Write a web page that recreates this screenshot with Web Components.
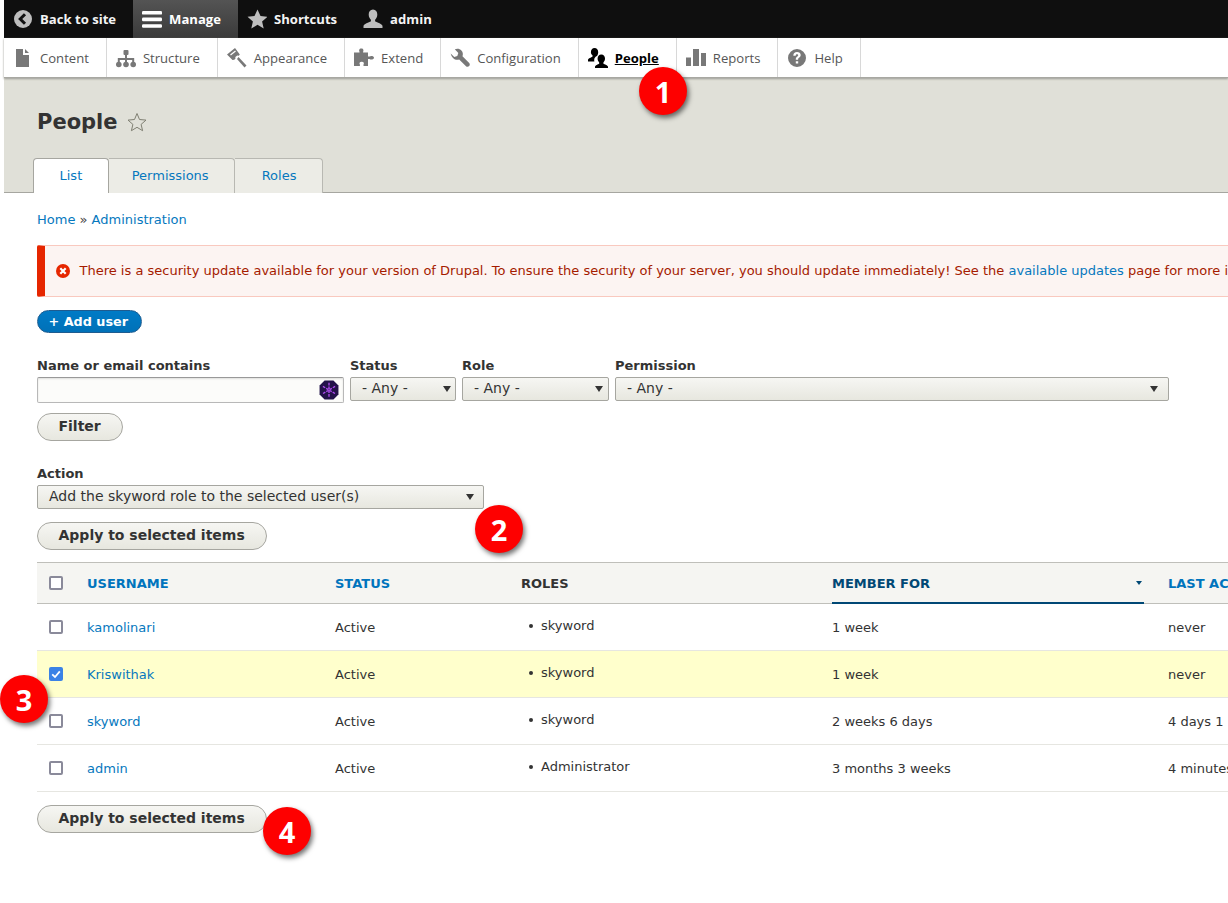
<!DOCTYPE html>
<html lang="en">
<head>
<meta charset="utf-8">
<title>People</title>
<style>
  html, body { margin: 0; padding: 0; height: 903px; overflow: hidden; background: #fff; }
  body { padding-left: 4px; font-family: "DejaVu Sans", sans-serif; font-size: 13px; color: #333; position: relative; }
</style>
</head>
<body>
<admin-toolbar>
  <toolbar-item><svg slot="icon" viewBox="0 0 20 20" width="20" height="20"><circle cx="10" cy="10" r="9" fill="#bebebe"/><path d="M12 5.200 7.200 10l4.800 4.800" fill="none" stroke="#111" stroke-width="3"/></svg>Back to site</toolbar-item>
  <toolbar-item active><svg slot="icon" viewBox="0 0 20 20" width="20" height="20"><g fill="#fff"><rect y="2" width="20" height="3.600" rx="1.200"/><rect y="8.600" width="20" height="3.600" rx="1.200"/><rect y="15.200" width="20" height="3.600" rx="1.200"/></g></svg>Manage</toolbar-item>
  <toolbar-item><svg slot="icon" viewBox="0 0 20 20" width="20" height="20"><path d="M10.500 .5l3 6.600 7 .7-5.400 4.700 1.600 7-6.200-3.700-6.200 3.700 1.600-7L.5 7.800l7-.7z" fill="#bebebe"/></svg>Shortcuts</toolbar-item>
  <toolbar-item><svg slot="icon" viewBox="0 0 20 20" width="20" height="20"><path d="M10 .5c2.800 0 4.300 2.200 4.300 5 0 2.300-1 4.300-2.200 5.200v1.600c0 .7 5.900 1.700 7.400 4.400V19H.5v-2.300c1.500-2.700 7.400-3.700 7.400-4.400v-1.600C6.700 9.800 5.700 7.800 5.700 5.500c0-2.800 1.500-5 4.300-5z" fill="#bebebe"/></svg>admin</toolbar-item>
</admin-toolbar>

<admin-tray>
  <tray-item><svg slot="icon" viewBox="0 0 20 20" width="20" height="20"><path d="M3 1h7v6h6v12H3zM12 1l4 4h-4z" fill="#787878"/></svg>Content</tray-item>
  <tray-item><svg slot="icon" viewBox="0 0 20 20" width="20" height="20"><g fill="#787878"><rect x="7.500" y="2" width="5" height="5" rx="1"/><circle cx="2.800" cy="16.500" r="2.800"/><circle cx="10" cy="16.500" r="2.800"/><circle cx="17.200" cy="16.500" r="2.800"/></g><path d="M10 5v11M2.800 15v-4h14.400v4" fill="none" stroke="#787878" stroke-width="2"/></svg>Structure</tray-item>
  <tray-item><svg slot="icon" viewBox="0 0 20 20" width="20" height="20"><path d="M8 0 0 6.500l5.500 5.500 1.800-.3 1.200-1.200-.2-1.500 2-1.500 1.500.2 1-1.200z" fill="#787878"/><path d="M11.500 9 19.500 17.500l-2 2L10 11z" fill="#787878"/><path d="M3.500 7 8.500 3" stroke="#fff" stroke-width="1.200"/></svg>Appearance</tray-item>
  <tray-item><svg slot="icon" viewBox="0 0 20 20" width="20" height="20"><path d="M0 4.500h5.500V3.800C4.800 2.800 5 .5 7.300 .5s2.500 2.300 1.800 3.300v.7H14v4h1.500c1-1 4.500-.8 4.500 1.200s-3.500 2.200-4.500 1.200H14V18H9.500v-1.500c.8-1 .5-2.800-1.800-2.800s-2.600 1.800-1.800 2.800V18H0z" fill="#787878"/></svg>Extend</tray-item>
  <tray-item><svg slot="icon" viewBox="0 0 20 20" width="20" height="20"><path d="M19.300 5.500 15.700 9l-3-1-1-3L15.200 1.300C12.900.3 10 .8 8.600 2.400 7 4 6.800 6.200 7.500 8.300L.8 15c-.8.800-.8 2.200 0 3s2.300 1 3.200.2l6.800-6.700c2 .7 4.300.4 5.900-1.200 1.700-1.600 2.300-3.600 2.600-4.800z" fill="#787878" transform="translate(20 0) scale(-1 1)"/></svg>Configuration</tray-item>
  <tray-item active><svg slot="icon" viewBox="0 0 20 20" width="20" height="20"><path d="M6.500 0c2.400 0 3.700 1.800 3.700 4.200 0 1.500-.5 2.800-1.200 3.700-1.500.4-2.800 2-2.800 4 0 .5 0 1 .2 1.500H0v-1.700c.8-1.800 4.500-2.500 4.500-3.200V7.300C3.600 6.500 2.900 5.500 2.900 4.200 2.900 1.800 4.300 0 6.500 0z" fill="#000"/><path d="M13.300 6.500c2.400 0 3.700 1.800 3.700 4.100 0 1.600-.6 2.900-1.600 3.800v1.100c0 .6 3.600 1.100 4.600 3.100V20H7v-1.400c1-2 4.200-2.500 4.200-3.100v-1.100c-1-.9-1.600-2.200-1.600-3.800 0-2.300 1.300-4.100 3.700-4.100z" fill="#000"/></svg>People</tray-item>
  <tray-item><svg slot="icon" viewBox="0 0 20 20" width="20" height="20"><g fill="#787878"><rect y="9.500" width="5" height="8.500"/><rect x="7" y="1" width="6" height="17"/><rect x="15" y="5" width="5" height="13"/></g></svg>Reports</tray-item>
  <tray-item><svg slot="icon" viewBox="0 0 20 20" width="20" height="20"><path fill-rule="evenodd" d="M10 1a9 9 0 1 1 0 18 9 9 0 0 1 0-18zM6.300 7.700h2.400c.1-.9.500-1.400 1.300-1.400.7 0 1.200.4 1.200 1 0 1.300-2.400 1.500-2.400 4v.5h2.300v-.4c0-1.600 2.600-1.900 2.600-4.300 0-1.900-1.600-3-3.700-3-2.300 0-3.600 1.300-3.700 3.600zM8.800 13.200v2.300h2.400v-2.300z" fill="#787878"/></svg>Help</tray-item>
</admin-tray>

<page-header title="People">
  <tab-link active style="--pad: 0 25.5px 1px">List</tab-link>
  <tab-link style="--pad: 0 25px 1px 23px">Permissions</tab-link>
  <tab-link style="--pad: 0 26px 1px 27px">Roles</tab-link>
</page-header>

<main-content>
  <bread-crumb></bread-crumb>
  <status-alert></status-alert>
  <drupal-button primary>+ Add user</drupal-button>

  <filter-bar>
    <form-field label="Name or email contains"><text-box></text-box></form-field>
    <form-field label="Status"><select-box width="106" arrow="4">- Any -</select-box></form-field>
    <form-field label="Role"><select-box width="147" arrow="5">- Any -</select-box></form-field>
    <form-field label="Permission"><select-box width="554" arrow="10">- Any -</select-box></form-field>
  </filter-bar>
  <drupal-button class="filter">Filter</drupal-button>

  <form-field class="action" label="Action"><select-box width="447" arrow="9">Add the skyword role to the selected user(s)</select-box></form-field>
  <drupal-button class="apply">Apply to selected items</drupal-button>

  <user-table>
    <user-row name="kamolinari" role="skyword" age="1 week" last="never"></user-row>
    <user-row name="Kriswithak" role="skyword" age="1 week" last="never" selected></user-row>
    <user-row name="skyword" role="skyword" age="2 weeks 6 days" last="4 days 1 hour ago"></user-row>
    <user-row name="admin" role="Administrator" age="3 months 3 weeks" last="4 minutes ago"></user-row>
  </user-table>

  <drupal-button class="apply2">Apply to selected items</drupal-button>
</main-content>

<number-badge n="1" style="left:639px;top:67px"></number-badge>
<number-badge n="2" style="left:475px;top:505px"></number-badge>
<number-badge n="3" style="left:0;top:675px"></number-badge>
<number-badge n="4" style="left:263px;top:807px"></number-badge>

<script>
function shadow(el, html) {
  el.attachShadow({ mode: "open" }).innerHTML = html;
}

class AdminToolbar extends HTMLElement {
  constructor() {
    super();
    shadow(this, `<style>
      :host { display: flex; height: 38px; background: #0f0f0f; }
    </style><slot></slot>`);
  }
}

const barItemStyle = `
  :host { display: flex; align-items: center; gap: 7px; padding: 0 17px 0 9px; height: 100%; box-sizing: border-box;
    font-family: "Open Sans", sans-serif; white-space: nowrap; }
  .icon { width: 20px; height: 20px; flex: none; }
`;

class ToolbarItem extends HTMLElement {
  constructor() {
    super();
    shadow(this, `<style>${barItemStyle}
      :host { color: #f4f4f4; font-weight: 700; font-size: 13.1px; }
      :host([active]) { background: linear-gradient(#545454, #3a3a3a); color: #fff; }
    </style><span class="icon"><slot name="icon"></slot></span><slot></slot>`);
  }
}

class AdminTray extends HTMLElement {
  constructor() {
    super();
    shadow(this, `<style>
      :host { display: flex; height: 39px; background: #fff; position: relative;
        box-shadow: 0 1px 2px 0 #9a9a94; border-bottom: 1px solid #a8a8a2; box-sizing: content-box; }
    </style><slot></slot>`);
  }
}

class TrayItem extends HTMLElement {
  constructor() {
    super();
    shadow(this, `<style>${barItemStyle}
      :host { color: #565656; border-right: 1px solid #d8d8d8; font-size: 13.1px; }
      :host([active]) { color: #000; font-weight: 700; text-decoration: underline; }
    </style><span class="icon"><slot name="icon"></slot></span><span><slot></slot></span>`);
  }
}

class PageHeader extends HTMLElement {
  constructor() {
    super();
    shadow(this, `<style>
      :host { display: block; height: 114px; background: #e0e0d8; border-bottom: 1px solid #a6a6a0; padding-left: 29px; box-sizing: content-box; }
      .title { display: flex; align-items: center; gap: 9px; height: 80px; padding-left: 4px; box-sizing: border-box; padding-top: 8px; }
      h1 { margin: 0; font: 700 21px "DejaVu Sans", sans-serif; color: #333; }
      .tabs { display: flex; }
    </style>
    <div class="title"><h1>${this.getAttribute("title")}</h1>
      <svg viewBox="0 0 20 20" width="20" height="20"><path d="M10 1.500l2.500 6 6.500.6-4.900 4.300 1.500 6.300L10 15.300l-5.600 3.400 1.500-6.300L1 8.100l6.500-.6z" fill="none" stroke="#7f7f72" stroke-width="1"/></svg>
    </div>
    <div class="tabs"><slot></slot></div>`);
  }
}

class TabLink extends HTMLElement {
  constructor() {
    super();
    shadow(this, `<style>
      :host { display: flex; align-items: center; height: 35px; box-sizing: border-box; padding: var(--pad, 0 25px 1px);
        color: #0678be; background: #ecece6; border: 1px solid #b8b8b2; border-bottom: 0; border-left: 0; border-radius: 0 4px 0 0; position: relative; }
      :host([active]) { background: #fff; border: 1px solid #a6a6a0; border-bottom: 0; border-radius: 4px 4px 0 0; margin-bottom: -1px; height: 35px; z-index: 1; }
    </style><slot></slot>`);
  }
}

class MainContent extends HTMLElement {
  constructor() {
    super();
    shadow(this, `<style>
      :host { display: block; padding: 0 0 0 33px; width: 1300px; box-sizing: border-box; }
      ::slotted(.filter) { margin-top: 10px; }
      ::slotted(.action) { margin-top: 24px; }
      ::slotted(.apply) { margin-top: 13px; }
      ::slotted(.apply2) { margin-top: 13px; }
    </style><slot></slot>`);
  }
}

class BreadCrumb extends HTMLElement {
  constructor() {
    super();
    shadow(this, `<style>
      :host { display: block; height: 16px; margin-top: 19px; line-height: 16px; color: #444; white-space: nowrap; }
      a { color: #0678be; text-decoration: none; }
    </style><a>Home</a> » <a>Administration</a>`);
  }
}

class StatusAlert extends HTMLElement {
  constructor() {
    super();
    shadow(this, `<style>
      :host { display: flex; align-items: center; gap: 9.5px; height: 52px; box-sizing: border-box; margin-top: 17px; padding-bottom: 2px;
        background: #fcf4f2; border: 1px solid #f9c9bf; border-left: 8px solid #e62600; padding-left: 11px; padding-right: 0;
        color: #a51b00; white-space: nowrap; border-radius: 2px 0 0 2px; }
      a { color: #0678be; text-decoration: none; }
      svg { flex: none; margin-top: 1px; }
    </style>
    <svg viewBox="0 0 14 14" width="14" height="14"><circle cx="7" cy="7" r="7" fill="#e62600"/><path d="M4.300 4.300l5.400 5.400M9.700 4.300l-5.400 5.400" stroke="#fff" stroke-width="2.200"/></svg>
    <span>There is a security update available for your version of Drupal. To ensure the security of your server, you should update immediately! See the <a>available updates</a> page for more information.</span>`);
  }
}

class DrupalButton extends HTMLElement {
  constructor() {
    super();
    shadow(this, `<style>
      :host { display: table; box-sizing: border-box; height: 28px; line-height: 25px; padding: 0 21.5px 0 20.5px; font-weight: 700; font-size: 14px;
        color: #333; border: 1px solid #a6a6a0; border-radius: 20px; background: linear-gradient(#f6f6f3, #e7e7df); }
      :host([primary]) { height: 23px; line-height: 21px; padding: 0 13px 0 10.5px; font-size: 12.8px; margin-top: 13px; color: #fff;
        border-color: #1e5c90; background: linear-gradient(#007bc6, #0071b8); }
    </style><slot></slot>`);
  }
}

class FilterBar extends HTMLElement {
  constructor() {
    super();
    shadow(this, `<style>
      :host { display: flex; gap: 6px; margin-top: 24px; }
    </style><slot></slot>`);
  }
}

class FormField extends HTMLElement {
  constructor() {
    super();
    shadow(this, `<style>
      :host { display: block; }
      label { display: block; height: 20px; line-height: 18px; font-weight: 700; color: #333; white-space: nowrap; }
    </style><label>${this.getAttribute("label")}</label><slot></slot>`);
  }
}

class TextBox extends HTMLElement {
  constructor() {
    super();
    shadow(this, `<style>
      :host { display: flex; align-items: center; justify-content: flex-end; width: 307px; height: 26px; box-sizing: border-box; padding-right: 4px;
        background: #fcfcfa; border: 1px solid #b8b8b8; border-top-color: #999; border-radius: 2px; box-shadow: inset 0 1px 2px rgba(0,0,0,.12); }
    </style>
    <svg viewBox="0 0 18 18" width="20" height="20"><path d="M5 .5h8L17.500 5v8L13 17.500H5L.5 13V5z" fill="#23124a"/><path d="M9 2.500v13M3.500 5.800l11 6.400M14.500 5.800l-11 6.400" stroke="#b04cf0" stroke-width="1.200" stroke-dasharray="2.400 1"/></svg>`);
  }
}

class SelectBox extends HTMLElement {
  constructor() {
    super();
    shadow(this, `<style>
      :host { display: flex; align-items: center; justify-content: space-between; width: ${this.getAttribute("width")}px; height: 24px; box-sizing: border-box;
        padding: 0 ${this.getAttribute("arrow")}px 2px 11px; font-size: 14px; color: #333; white-space: nowrap;
        background: linear-gradient(#f6f6f3, #e7e7df); border: 1px solid #a6a6a0; border-radius: 2px; }
      i { width: 0; height: 0; border: 4.5px solid transparent; border-top: 6px solid #333; border-bottom: 0; margin-top: 2px; }
    </style><span><slot></slot></span><i></i>`);
  }
}

class UserTable extends HTMLElement {
  constructor() {
    super();
    shadow(this, `<style>
      :host { display: block; margin-top: 12px; }
      .head { display: grid; grid-template-columns: 50px 248px 186px 311px 336px 1fr; align-items: center; height: 42px; box-sizing: border-box;
        background: #f5f5f2; border-top: 1px solid #bfbfba; border-bottom: 1px solid #bfbfba; font-weight: 700; font-size: 13px; white-space: nowrap; position: relative; }
      .sort { color: #0074bd; }
      .plain { color: #333; }
      .active { color: #004875; position: relative; align-self: stretch; display: flex; align-items: center; width: 312px; }
      .active::before { content: ""; position: absolute; left: 0; right: 0; bottom: -1px; height: 2px; background: #004875; }
      .active i { position: absolute; right: 2px; top: 18px; border: 3.5px solid transparent; border-top: 4px solid #004875; border-bottom: 0; }
      input { appearance: none; display: block; margin: 0 0 0 12px; width: 14px; height: 14px; box-sizing: border-box; border: 2px solid #8a8a9a; border-radius: 2px; background: #fff; }
    </style>
    <div class="head">
      <div><input type="checkbox"></div>
      <div class="sort">USERNAME</div>
      <div class="sort">STATUS</div>
      <div class="plain">ROLES</div>
      <div class="active">MEMBER FOR<i></i></div>
      <div class="sort">LAST ACCESS</div>
    </div>
    <slot></slot>`);
  }
}

class UserRow extends HTMLElement {
  constructor() {
    super();
    const g = (k) => this.getAttribute(k);
    const checked = this.hasAttribute("selected");
    shadow(this, `<style>
      :host { display: grid; grid-template-columns: 50px 248px 186px 311px 336px 1fr; align-items: center; height: 47px; box-sizing: border-box;
        border-bottom: 1px solid #e6e6e1; color: #333; white-space: nowrap; }
      :host([selected]) { background: #ffffcc; }
      a { color: #0678be; text-decoration: none; }
      .box { display: flex; align-items: center; justify-content: center; margin-left: 12px; width: 14px; height: 14px; box-sizing: border-box; border: 2px solid #8a8a9a; border-radius: 2px; background: #fff; }
      .box.on { background: #3b82e6; border-color: #3b82e6; }
      .role { padding-left: 8px; position: relative; top: -2px; display: flex; gap: 8px; align-items: center; }
      .role i { width: 4px; height: 4px; border-radius: 50%; background: #333; margin-top: 1px; }
    </style>
    <div><span class="box ${checked ? "on" : ""}">${checked ? `<svg viewBox="0 0 10 10" width="10" height="10"><path d="M1.200 5.400 4 8l4.800-5.600" fill="none" stroke="#fff" stroke-width="1.800"/></svg>` : ""}</span></div>
    <div><a>${g("name")}</a></div>
    <div>Active</div>
    <div class="role"><i></i><span>${g("role")}</span></div>
    <div>${g("age")}</div>
    <div>${g("last")}</div>`);
  }
}

class NumberBadge extends HTMLElement {
  constructor() {
    super();
    shadow(this, `<style>
      :host { position: absolute; display: flex; align-items: center; justify-content: center; width: 48px; height: 48px; border-radius: 50%;
        background: #fe0000; color: #fff; font: 700 29px "Open Sans", sans-serif; box-shadow: 2px 3px 5px rgba(0,0,0,.55); }
    </style>${this.getAttribute("n")}`);
  }
}

customElements.define("admin-toolbar", AdminToolbar);
customElements.define("toolbar-item", ToolbarItem);
customElements.define("admin-tray", AdminTray);
customElements.define("tray-item", TrayItem);
customElements.define("page-header", PageHeader);
customElements.define("tab-link", TabLink);
customElements.define("main-content", MainContent);
customElements.define("bread-crumb", BreadCrumb);
customElements.define("status-alert", StatusAlert);
customElements.define("drupal-button", DrupalButton);
customElements.define("filter-bar", FilterBar);
customElements.define("form-field", FormField);
customElements.define("text-box", TextBox);
customElements.define("select-box", SelectBox);
customElements.define("user-table", UserTable);
customElements.define("user-row", UserRow);
customElements.define("number-badge", NumberBadge);
</script>
</body>
</html>
